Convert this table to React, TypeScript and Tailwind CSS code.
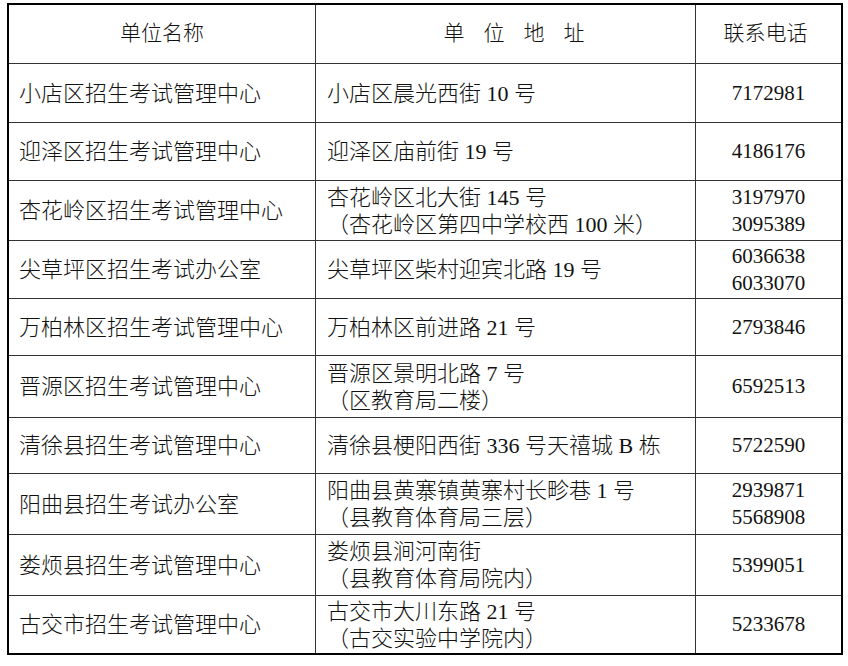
import React from "react";

type Row = {
  name: string;
  addr: string[];
  phone: string[];
  h: string;
};

const rows: Row[] = [
  { name: "小店区招生考试管理中心", addr: ["小店区晨光西街 10 号"], phone: ["7172981"], h: "h-[59px]" },
  { name: "迎泽区招生考试管理中心", addr: ["迎泽区庙前街 19 号"], phone: ["4186176"], h: "h-[58px]" },
  {
    name: "杏花岭区招生考试管理中心",
    addr: ["杏花岭区北大街 145 号", "（杏花岭区第四中学校西 100 米）"],
    phone: ["3197970", "3095389"],
    h: "h-[60px]",
  },
  { name: "尖草坪区招生考试办公室", addr: ["尖草坪区柴村迎宾北路 19 号"], phone: ["6036638", "6033070"], h: "h-[58px]" },
  { name: "万柏林区招生考试管理中心", addr: ["万柏林区前进路 21 号"], phone: ["2793846"], h: "h-[57px]" },
  { name: "晋源区招生考试管理中心", addr: ["晋源区景明北路 7 号", "（区教育局二楼）"], phone: ["6592513"], h: "h-[62px]" },
  { name: "清徐县招生考试管理中心", addr: ["清徐县梗阳西街 336 号天禧城 B 栋"], phone: ["5722590"], h: "h-[56px]" },
  {
    name: "阳曲县招生考试办公室",
    addr: ["阳曲县黄寨镇黄寨村长畛巷 1 号", "（县教育体育局三层）"],
    phone: ["2939871", "5568908"],
    h: "h-[61px]",
  },
  { name: "娄烦县招生考试管理中心", addr: ["娄烦县涧河南街", "（县教育体育局院内）"], phone: ["5399051"], h: "h-[61px]" },
  { name: "古交市招生考试管理中心", addr: ["古交市大川东路 21 号", "（古交实验中学院内）"], phone: ["5233678"], h: "h-[57px]" },
];

const font = { fontFamily: '"Liberation Serif", "Noto Sans CJK SC", sans-serif' };

export default function App() {
  return (
    <div className="min-h-[666px] w-[848px] bg-white pl-[7px] pt-[3px] font-light text-[#111]" style={font}>
      <table className="table-fixed border-separate border-spacing-0 border-2 border-black">
        <colgroup>
          <col className="w-[307px]" />
          <col className="w-[380px]" />
          <col className="w-[145px]" />
        </colgroup>
        <thead>
          <tr>
            <th className="h-[59px] border-b border-r border-[#333] p-0 text-center align-middle text-[21px] font-light">
              单位名称
            </th>
            <th className="h-[59px] border-b border-r border-[#333] p-0 text-center align-middle text-[21px] font-light">
              <span className="pl-[36px] tracking-[19px]">单位地址</span>
            </th>
            <th className="h-[59px] border-b border-[#333] p-0 pr-[6px] text-center align-middle text-[21px] font-light">
              联系电话
            </th>
          </tr>
        </thead>
        <tbody>
          {rows.map((r, i) => {
            const last = i === rows.length - 1;
            return (
              <tr key={r.name}>
                <td
                  className={`${r.h} ${last ? "" : "border-b"} border-r border-[#333] p-0 pl-[10px] align-middle text-[22px] leading-[27px] whitespace-nowrap`}
                >
                  {r.name}
                </td>
                <td
                  className={`${r.h} ${last ? "" : "border-b"} border-r border-[#333] p-0 pl-[11px] align-middle text-[22px] leading-[27px] whitespace-nowrap`}
                >
                  {r.addr.map((a) => (
                    <div key={a}>{a}</div>
                  ))}
                </td>
                <td
                  className={`${r.h} ${last ? "" : "border-b"} border-[#333] p-0 text-center align-middle text-[21px] leading-[27px]`}
                >
                  {r.phone.map((p) => (
                    <div key={p}>{p}</div>
                  ))}
                </td>
              </tr>
            );
          })}
        </tbody>
      </table>
    </div>
  );
}
